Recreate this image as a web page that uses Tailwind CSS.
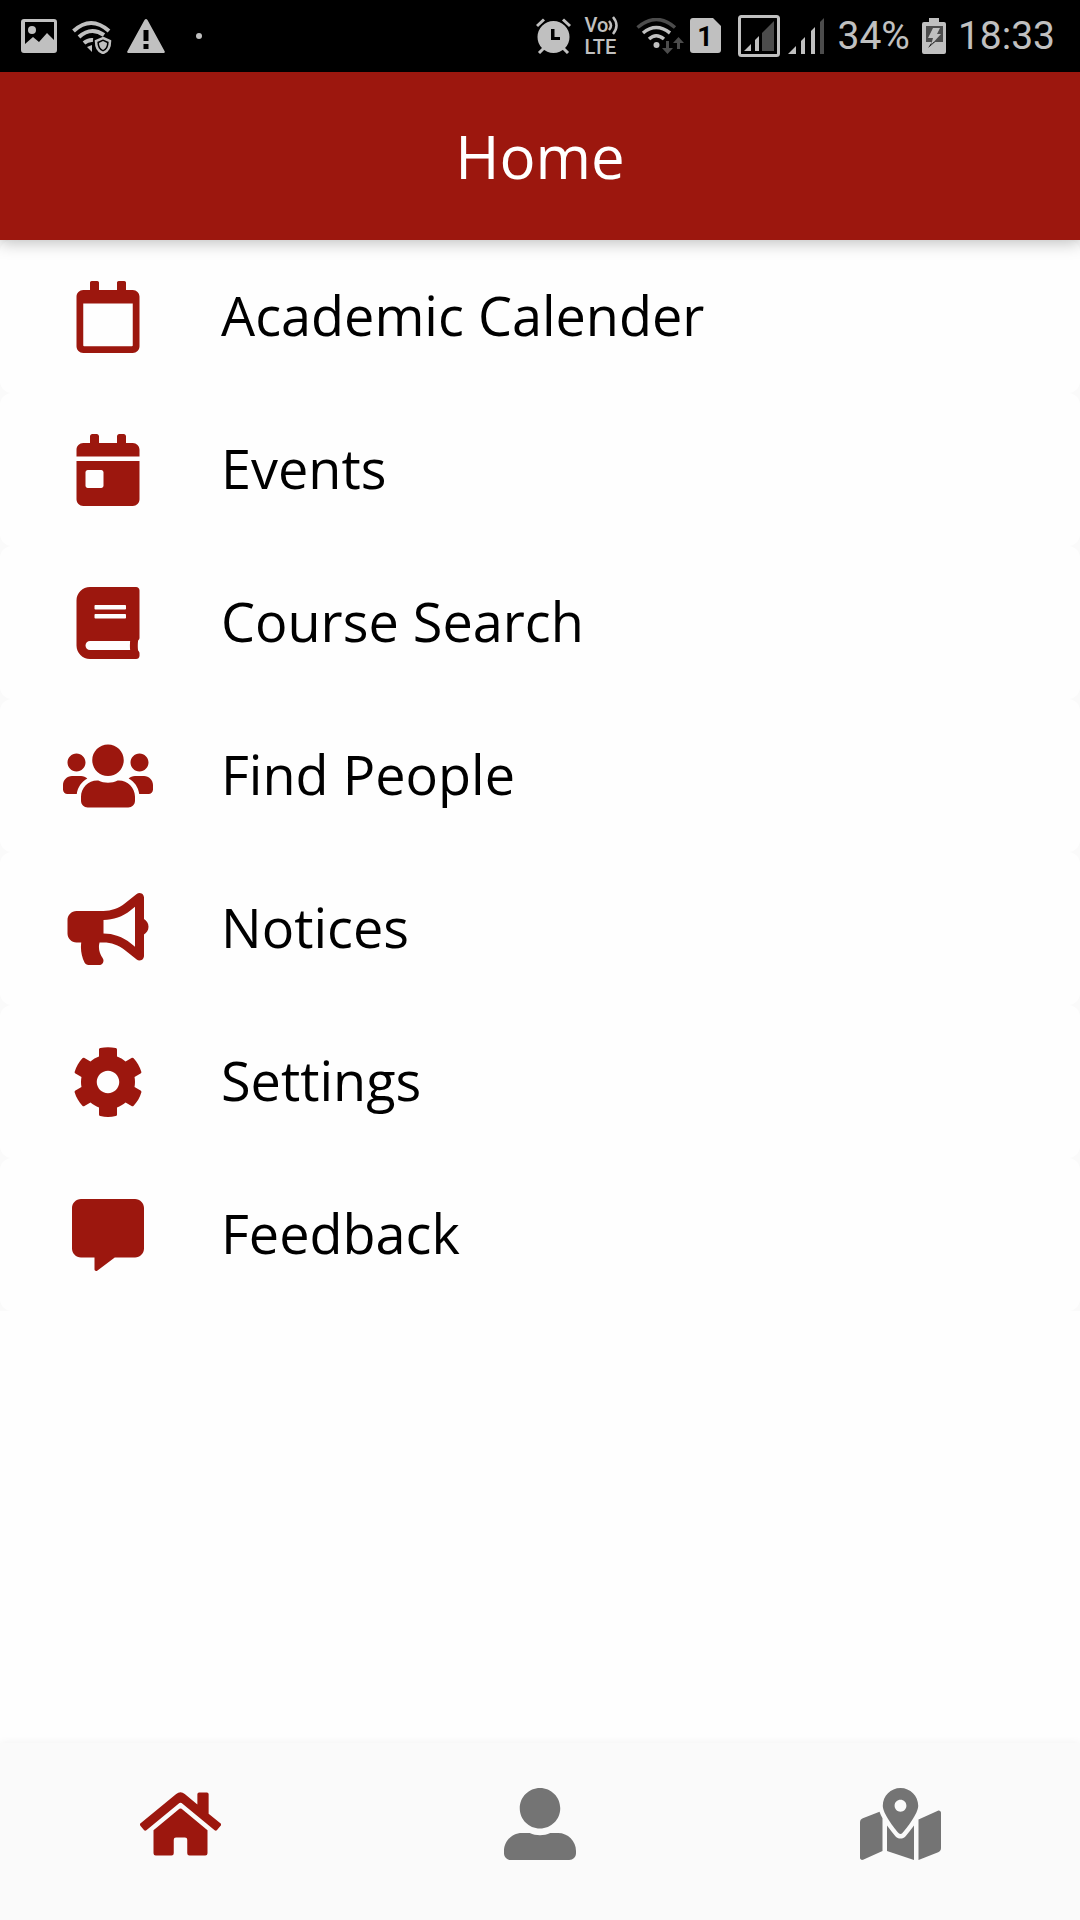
<!DOCTYPE html>
<html lang="en">
<head>
<meta charset="utf-8">
<meta name="viewport" content="width=device-width, initial-scale=1">
<title>Home</title>
<script src="https://cdn.jsdelivr.net/npm/@tailwindcss/browser@4"></script>
</head>
<body class="flex min-h-screen flex-col bg-[#fefefe] font-['Open_Sans',sans-serif] text-black">

<!-- Status bar -->
<div class="flex h-[72px] shrink-0 items-center justify-between bg-black pr-[25px] pl-[21px] font-['Roboto',sans-serif] text-[39px] leading-none text-[#c0c0c0]">
  <div class="flex items-center gap-[15px]">
    <svg class="h-9 w-9" viewBox="0 0 36 36" fill="currentColor" aria-hidden="true"><path fill-rule="evenodd" d="M3 1h30q3 0 3 3v28q0 3-3 3H3q-3 0-3-3V4q0-3 3-3zm1 3v22l8-7 6 5 8-9 7 7V4z"/><circle cx="11" cy="12" r="4"/></svg>
    <svg class="h-9 w-10" viewBox="0 0 40 36" fill="none" stroke="currentColor" stroke-width="4" aria-hidden="true"><path d="M1.500 13Q19-3 37 13M7 19q12-11 25-2M12 25q4-3.500 9-3"/><path fill="currentColor" stroke="none" d="M15 29l5-2v7z"/><path stroke-width="2.500" d="M31 20l7 3q0 10-7 12-7-2-7-12z"/><path fill="currentColor" stroke="none" d="M31 23l4 2q0 5-4 7-4-2-4-7z"/></svg>
    <svg class="h-9 w-[38px]" viewBox="0 0 38 36" fill="currentColor" aria-hidden="true"><path fill-rule="evenodd" d="M17.500 2Q19 0 20.500 2L37.500 33q1 2-1 2h-35q-2 0-1-2zM16.500 12v11h5V12zm0 14v5h5v-5z"/></svg>
    <span class="ml-4 h-[6px] w-[6px] rounded-full bg-[#c0c0c0]"></span>
  </div>
  <div class="flex items-center">
    <svg class="h-9 w-9" viewBox="0 0 36 36" fill="currentColor" aria-hidden="true"><path fill-rule="evenodd" d="M17.500 3a16 16 0 1 1 0 32 16 16 0 0 1 0-32zM15 11v11h9v-3h-5.500v-8z"/><path fill="none" stroke="currentColor" stroke-width="3" d="M1 8l7-6.500M27 1.500L34 8M8 30l-5 5M27 30l5 5"/></svg>
    <div class="ml-3 flex w-9 flex-col text-[20px] leading-[22px] font-medium">
      <div class="flex items-center"><span>Vo</span><svg class="h-5 w-3" viewBox="0 0 12 20" fill="none" stroke="currentColor" stroke-width="2.500" aria-hidden="true"><path d="M1 6q4 4.500 0 9M5 2q7 8.500 0 17"/></svg></div>
      <span>LTE</span>
    </div>
    <svg class="ml-4 h-9 w-12" viewBox="0 0 48 36" fill="none" stroke="currentColor" stroke-width="3.500" aria-hidden="true"><path stroke="#4c4c4c" d="M1.500 9.500q19-16 37.500 0"/><path d="M7 15q13-11 27 0M13 21q7-6.500 15 0"/><circle cx="20.500" cy="27" r="3" fill="currentColor" stroke="none"/><g fill="#4c4c4c" stroke="none"><path d="M30 23h3v7h4l-5.500 6L26 30h4zM41 31h3v-6h4l-5.500-6L37 25h4z"/></g></svg>
    <svg class="ml-[6px] h-9 w-8" viewBox="0 0 32 36" fill="currentColor" aria-hidden="true"><path d="M3 0h20l8 8v24q0 3-3 3H3q-3 0-3-3V3q0-3 3-3z"/><text x="15" y="28" text-anchor="middle" font-family="Roboto, sans-serif" font-size="27" font-weight="700" fill="#000">1</text></svg>
    <svg class="ml-4 h-[42px] w-[42px]" viewBox="0 0 42 42" fill="currentColor" aria-hidden="true"><rect x="1.500" y="1.500" width="39" height="39" rx="2" fill="none" stroke="currentColor" stroke-width="3"/><path d="M6 36l7-7v7zM17 25l4-4v15h-4z"/><path fill="#4c4c4c" d="M24 18L36 6v30H24z"/></svg>
    <svg class="ml-2 h-9 w-9" viewBox="0 0 36 36" fill="currentColor" aria-hidden="true"><path d="M0 36l8-8v8zM13 23l4-4v17h-4zM23 13l4-4v27h-4z"/><path fill="#4c4c4c" d="M32 4l4-4v36h-4z"/></svg>
    <span class="ml-[13px]">34%</span>
    <svg class="ml-3 h-9 w-6" viewBox="0 0 24 36" fill="currentColor" aria-hidden="true"><path d="M7 0h10v4h5q2 0 2 2v28q0 2-2 2H2q-2 0-2-2V6q0-2 2-2h5z"/><path fill="#4c4c4c" d="M4 8h17v16H4z"/><path fill="#000" d="M10 24h3l-7 6z"/><path d="M11 10h7l-3 6h4L9 27l2-7H6z"/></svg>
    <span class="ml-3">18:33</span>
  </div>
</div>

<header class="z-10 flex h-[168px] shrink-0 items-center justify-center bg-[#9c170e] shadow-[0_3px_15px_rgba(0,0,0,0.25)]">
  <h1 class="text-[60px] leading-[80px] text-white">Home</h1>
</header>

<main class="flex-1">
  <ul class="bg-[#fafafa] text-[54px] leading-[72px]">
    <li><a href="#calendar" class="flex h-[153px] items-center gap-[68px] rounded-xl bg-[#fefefe] pl-[63px]">
      <svg class="h-[72px] w-[90px] text-[#9c170e]" viewBox="0 0 448 512" fill="currentColor" aria-hidden="true"><path d="M400 64h-48V12c0-6.600-5.400-12-12-12h-40c-6.600 0-12 5.400-12 12v52H160V12c0-6.600-5.400-12-12-12h-40c-6.600 0-12 5.400-12 12v52H48C21.500 64 0 85.500 0 112v352c0 26.500 21.500 48 48 48h352c26.500 0 48-21.500 48-48V112c0-26.500-21.500-48-48-48zm-6 400H54c-3.300 0-6-2.700-6-6V160h352v298c0 3.300-2.700 6-6 6z"/></svg>
      <span class="pb-1">Academic Calender</span></a></li>
    <li><a href="#events" class="flex h-[153px] items-center gap-[68px] rounded-xl bg-[#fefefe] pl-[63px]">
      <svg class="h-[72px] w-[90px] text-[#9c170e]" viewBox="0 0 448 512" fill="currentColor" aria-hidden="true"><path d="M0 464c0 26.500 21.500 48 48 48h352c26.500 0 48-21.500 48-48V192H0v272zm64-192c0-8.800 7.200-16 16-16h96c8.800 0 16 7.200 16 16v96c0 8.800-7.200 16-16 16H80c-8.800 0-16-7.200-16-16v-96zM400 64h-48V16c0-8.800-7.200-16-16-16h-32c-8.800 0-16 7.200-16 16v48H160V16c0-8.800-7.200-16-16-16h-32c-8.800 0-16 7.200-16 16v48H48C21.500 64 0 85.500 0 112v48h448v-48c0-26.500-21.500-48-48-48z"/></svg>
      <span class="pb-1">Events</span></a></li>
    <li><a href="#courses" class="flex h-[153px] items-center gap-[68px] rounded-xl bg-[#fefefe] pl-[63px]">
      <svg class="h-[72px] w-[90px] text-[#9c170e]" viewBox="0 0 448 512" fill="currentColor" aria-hidden="true"><path d="M448 360V24c0-13.300-10.700-24-24-24H96C43 0 0 43 0 96v320c0 53 43 96 96 96h328c13.300 0 24-10.700 24-24v-16c0-7.500-3.500-14.300-8.900-18.700-4.200-15.400-4.200-59.300 0-74.700 5.400-4.300 8.900-11.100 8.900-18.600zM128 134c0-3.300 2.700-6 6-6h212c3.300 0 6 2.700 6 6v20c0 3.300-2.700 6-6 6H134c-3.300 0-6-2.700-6-6v-20zm0 64c0-3.300 2.700-6 6-6h212c3.300 0 6 2.700 6 6v20c0 3.300-2.700 6-6 6H134c-3.300 0-6-2.700-6-6v-20zm253.400 250H96c-17.700 0-32-14.300-32-32 0-17.600 14.400-32 32-32h285.400c-1.900 17.100-1.900 46.900 0 64z"/></svg>
      <span class="pb-1">Course Search</span></a></li>
    <li><a href="#people" class="flex h-[153px] items-center gap-[68px] rounded-xl bg-[#fefefe] pl-[63px]">
      <svg class="h-[72px] w-[90px] text-[#9c170e]" viewBox="0 0 640 512" fill="currentColor" aria-hidden="true"><path d="M96 224c35.300 0 64-28.700 64-64s-28.700-64-64-64-64 28.700-64 64 28.700 64 64 64zm448 0c35.300 0 64-28.700 64-64s-28.700-64-64-64-64 28.700-64 64 28.700 64 64 64zm32 32h-64c-17.600 0-33.500 7.100-45.100 18.600 40.300 22.100 68.900 62 75.100 109.400h66c17.700 0 32-14.300 32-32v-32c0-35.300-28.700-64-64-64zm-256 0c61.900 0 112-50.100 112-112S381.900 32 320 32 208 82.100 208 144s50.100 112 112 112zm76.800 32h-8.300c-20.800 10-43.900 16-68.500 16s-47.600-6-68.500-16h-8.300C179.600 288 128 339.600 128 403.200V432c0 26.500 21.500 48 48 48h288c26.500 0 48-21.500 48-48v-28.800c0-63.600-51.600-115.200-115.200-115.200zm-223.700-13.400C161.500 263.100 145.600 256 128 256H64c-35.300 0-64 28.700-64 64v32c0 17.700 14.300 32 32 32h65.900c6.300-47.400 34.900-87.300 75.200-109.400z"/></svg>
      <span class="pb-1">Find People</span></a></li>
    <li><a href="#notices" class="flex h-[153px] items-center gap-[68px] rounded-xl bg-[#fefefe] pl-[63px]">
      <svg class="h-[72px] w-[90px] text-[#9c170e]" viewBox="0 0 576 512" fill="currentColor" aria-hidden="true"><path d="M576 240c0-23.630-12.950-44.040-32-55.120V32.010C544 23.260 537.020 0 512 0c-7.120 0-14.190 2.380-19.980 7.020l-85.030 68.030C364.280 109.190 310.660 128 256 128H64c-35.350 0-64 28.650-64 64v96c0 35.350 28.650 64 64 64h33.700c-1.390 10.480-2.180 21.140-2.180 32 0 39.770 9.260 77.350 25.560 110.940 5.190 10.690 16.520 17.060 28.400 17.060h74.280c26.050 0 41.690-29.840 25.900-50.560-16.400-21.520-26.150-48.360-26.150-77.440 0-11.110 1.620-21.790 4.410-32H256c54.660 0 108.280 18.810 150.980 52.950l85.030 68.030a32.023 32.023 0 0 0 19.980 7.020c24.920 0 32-22.780 32-32V295.130C563.050 284.040 576 263.630 576 240zm-96 141.420l-33.050-26.440C392.950 311.780 325.120 288 256 288v-96c69.120 0 136.950-23.780 190.950-66.980L480 98.580v282.840z"/></svg>
      <span class="pb-1">Notices</span></a></li>
    <li><a href="#settings" class="flex h-[153px] items-center gap-[68px] rounded-xl bg-[#fefefe] pl-[63px]">
      <svg class="h-[72px] w-[90px] text-[#9c170e]" viewBox="0 0 512 512" fill="currentColor" aria-hidden="true"><path d="M487.400 315.700l-42.600-24.600c4.300-23.200 4.300-47 0-70.200l42.600-24.600c4.900-2.800 7.100-8.600 5.500-14-11.100-35.600-30-67.800-54.700-94.600-3.800-4.100-10-5.100-14.800-2.300L380.800 110c-17.900-15.400-38.500-27.300-60.800-35.100V25.800c0-5.600-3.900-10.500-9.400-11.700-36.700-8.200-74.300-7.800-109.200 0-5.500 1.200-9.400 6.100-9.400 11.700V75c-22.200 7.900-42.800 19.800-60.800 35.100L88.700 85.500c-4.900-2.800-11-1.900-14.800 2.300-24.700 26.700-43.600 58.900-54.700 94.600-1.700 5.400.6 11.200 5.500 14L67.300 221c-4.300 23.200-4.300 47 0 70.200l-42.600 24.600c-4.900 2.800-7.100 8.600-5.500 14 11.100 35.600 30 67.800 54.700 94.600 3.800 4.100 10 5.100 14.800 2.300l42.600-24.600c17.900 15.400 38.500 27.300 60.800 35.100v49.200c0 5.600 3.900 10.500 9.400 11.700 36.700 8.200 74.300 7.800 109.200 0 5.500-1.200 9.400-6.100 9.400-11.700v-49.200c22.200-7.900 42.800-19.800 60.800-35.100l42.600 24.600c4.900 2.800 11 1.900 14.800-2.300 24.700-26.700 43.600-58.900 54.700-94.600 1.500-5.500-.7-11.300-5.600-14.100zM256 336c-44.100 0-80-35.900-80-80s35.900-80 80-80 80 35.900 80 80-35.900 80-80 80z"/></svg>
      <span class="pb-1">Settings</span></a></li>
    <li><a href="#feedback" class="flex h-[153px] items-center gap-[68px] rounded-xl bg-[#fefefe] pl-[63px]">
      <svg class="h-[72px] w-[90px] text-[#9c170e]" viewBox="0 0 512 512" fill="currentColor" aria-hidden="true"><path d="M448 0H64C28.700 0 0 28.700 0 64v288c0 35.300 28.700 64 64 64h96v84c0 9.800 11.200 15.500 19.100 9.700L304 416h144c35.300 0 64-28.700 64-64V64c0-35.300-28.700-64-64-64z"/></svg>
      <span class="pb-1">Feedback</span></a></li>
  </ul>
</main>

<nav class="grid shrink-0 grid-cols-3 bg-[#fafafa] pt-[45px] pb-[60px] text-[#747474] shadow-[0_0_8px_rgba(0,0,0,0.06)]" aria-label="Main">
  <a href="#home" aria-label="Home" aria-current="page" class="flex justify-center text-[#9c170e]">
    <svg class="h-[72px] w-[81px]" viewBox="0 0 576 512" fill="currentColor" aria-hidden="true"><path d="M280.370 148.260L96 300.110V464a16 16 0 0 0 16 16l112.060-.29a16 16 0 0 0 15.920-16V368a16 16 0 0 1 16-16h64a16 16 0 0 1 16 16v95.640a16 16 0 0 0 16 16.050L464 480a16 16 0 0 0 16-16V300L295.670 148.260a12.190 12.190 0 0 0-15.300 0zM571.600 251.470L488 182.560V44.050a12 12 0 0 0-12-12h-56a12 12 0 0 0-12 12v72.610L318.470 43a48 48 0 0 0-61 0L4.340 251.470a12 12 0 0 0-1.600 16.900l25.500 31A12 12 0 0 0 45.150 301l235.220-193.740a12.190 12.190 0 0 1 15.300 0L530.900 301a12 12 0 0 0 16.900-1.600l25.500-31a12 12 0 0 0-1.700-16.930z"/></svg>
  </a>
  <a href="#profile" aria-label="Profile" class="flex justify-center">
    <svg class="h-[72px] w-[72px]" viewBox="0 0 512 512" fill="currentColor" aria-hidden="true"><path d="M256 288c79.500 0 144-64.500 144-144S335.500 0 256 0 112 64.500 112 144s64.500 144 144 144zm128 32h-55.100c-22.200 10.200-46.900 16-72.900 16s-50.600-5.800-72.900-16H128C57.300 320 0 377.300 0 448v16c0 26.500 21.500 48 48 48h416c26.500 0 48-21.500 48-48v-16c0-70.700-57.300-128-128-128z"/></svg>
  </a>
  <a href="#map" aria-label="Map" class="flex justify-center">
    <svg class="h-[72px] w-[81px]" viewBox="0 0 576 512" fill="currentColor" aria-hidden="true"><path d="M288 0c-69.590 0-126 56.410-126 126 0 56.260 82.350 158.800 113.900 196.020 6.390 7.540 17.820 7.540 24.200 0C331.650 284.800 414 182.260 414 126 414 56.410 357.590 0 288 0zm0 168c-23.200 0-42-18.800-42-42s18.800-42 42-42 42 18.800 42 42-18.800 42-42 42zM20.120 215.950A32.006 32.006 0 0 0 0 245.660v250.320c0 11.320 11.430 19.060 21.940 14.860L160 448V214.920c-8.840-15.980-16.070-31.540-21.250-46.420L20.120 215.950zM288 359.670c-14.070 0-27.380-6.180-36.510-16.960-19.660-23.200-40.570-49.620-59.490-76.720v182l192 64V266c-18.920 27.090-39.820 53.520-59.490 76.720-9.130 10.770-22.440 16.950-36.510 16.950zm266.060-198.510L416 224v288l139.880-55.950A31.996 31.996 0 0 0 576 426.340V176.020c0-11.320-11.430-19.060-21.940-14.860z"/></svg>
  </a>
</nav>
</body>
</html>
